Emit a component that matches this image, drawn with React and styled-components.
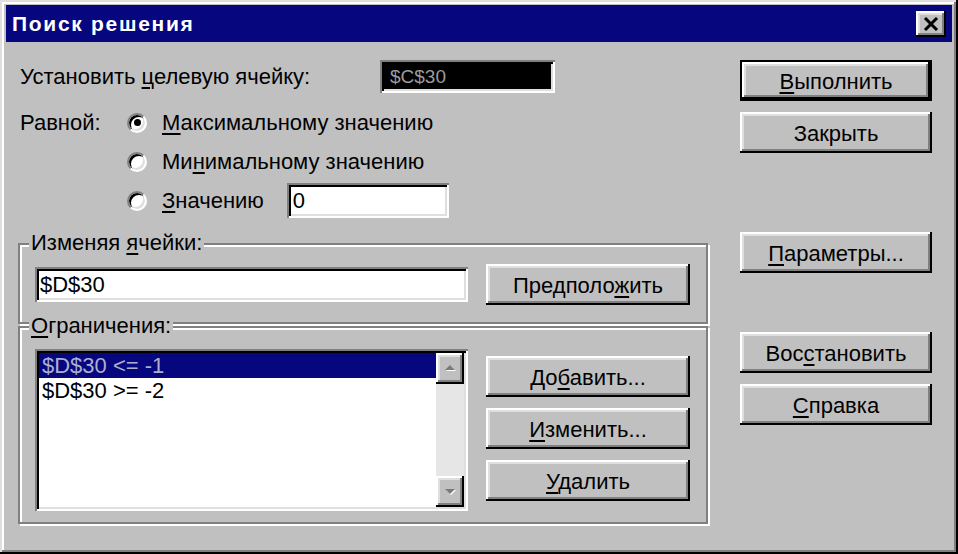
import styled, { createGlobalStyle } from "styled-components";

const GlobalStyle = createGlobalStyle`
    html, body {
        margin: 0;
        padding: 0;
        background: #c0c0c0;
    }
    body {
        font-family: "Liberation Sans", Arial, sans-serif;
        color: #000;
    }
    * {
        box-sizing: border-box;
    }
`;

const raised = `
    box-shadow: inset -2px -2px 0 #000, inset 2px 2px 0 #fff,
        inset -4px -4px 0 #808080, inset 4px 4px 0 #dfdfdf;
`;
const sunken = `
    box-shadow: inset 2px 2px 0 #808080, inset -2px -2px 0 #fff,
        inset 4px 4px 0 #000, inset -4px -4px 0 #dfdfdf;
`;

const Window = styled.div`
    width: 958px;
    height: 554px;
    padding: 5px 6px;
    background: #c0c0c0;
    box-shadow: inset -2px -2px 0 #000, inset 2px 2px 0 #dfdfdf,
        inset -4px -4px 0 #808080, inset 4px 4px 0 #fff;
`;
const TitleBar = styled.div`
    height: 37px;
    display: flex;
    align-items: center;
    justify-content: space-between;
    padding: 0 6px;
    background: #06067f;
`;
const Title = styled.span`
    color: #fff;
    font-weight: bold;
    font-size: 21px;
    letter-spacing: 1.7px;
`;
const CloseButton = styled.button`
    width: 30px;
    height: 26px;
    border: 0;
    padding: 0;
    background: #c0c0c0;
    display: flex;
    align-items: center;
    justify-content: center;
    ${raised}
`;
const Body = styled.div`
    display: flex;
`;
const Main = styled.div`
    width: 702px;
    padding-left: 14px;
`;
const TargetRow = styled.div`
    display: grid;
    grid-template-columns: 360px 175px;
    align-items: center;
    margin-top: 18px;
    height: 33px;
`;
const Label = styled.span`
    font-size: 22px;
    white-space: nowrap;
`;
const Key = styled.u`
    text-decoration-thickness: 2px;
    text-underline-offset: 3px;
`;
const TargetField = styled.div`
    height: 33px;
    background: #000;
    color: #9c9c9c;
    font-size: 19px;
    line-height: 33px;
    padding-left: 10px;
    ${sunken}
`;
const Options = styled.div`
    display: grid;
    grid-template-columns: 107px 1fr;
    grid-auto-rows: 39px;
    align-items: center;
    margin-top: 10px;
`;
const RadioRow = styled.div`
    grid-column: 2;
    display: flex;
    align-items: center;
    gap: 15px;
`;
const Radio = styled.span`
    width: 20px;
    height: 20px;
    flex: none;
    border-radius: 50%;
    border: 2px solid;
    border-color: #808080 #fff #fff #808080;
    background: #fff;
    box-shadow: inset 2px 2px 0 #000, inset -2px -2px 0 #dfdfdf;
    display: flex;
    align-items: center;
    justify-content: center;
    &::after {
        content: "";
        width: 7px;
        height: 7px;
        border-radius: 50%;
        background: ${p => (p.$checked ? "#000" : "transparent")};
    }
`;
const ValueField = styled.div`
    width: 162px;
    height: 35px;
    margin-left: 8px;
    background: #fff;
    font-size: 22px;
    line-height: 35px;
    padding-left: 6px;
    ${sunken}
`;
const Group = styled.div`
    position: relative;
    width: 690px;
    margin-left: -2px;
    margin-top: ${p => p.$mt}px;
    border: 2px solid #808080;
    box-shadow: inset 2px 2px 0 #fff, 2px 2px 0 #fff;
    padding: ${p => p.$pad};
`;
const Legend = styled.span`
    position: absolute;
    top: -14px;
    left: 9px;
    padding: 0 2px;
    font-size: 22px;
    line-height: 24px;
    background: #c0c0c0;
`;
const FieldRow = styled.div`
    display: flex;
    align-items: center;
    justify-content: space-between;
`;
const TextField = styled.div`
    width: 433px;
    height: 35px;
    background: #fff;
    font-size: 22px;
    line-height: 35px;
    padding-left: 5px;
    ${sunken}
`;
const Button = styled.button`
    width: ${p => p.$width || 192}px;
    height: 41px;
    padding: 2px 0 0;
    border: ${p => (p.$default ? "2px solid #000" : "0")};
    background: #c0c0c0;
    font-family: "Liberation Sans", Arial, sans-serif;
    font-size: 22px;
    color: #000;
    text-align: center;
    ${raised}
`;
const ListRow = styled.div`
    display: flex;
    justify-content: space-between;
    align-items: flex-start;
`;
const ListBox = styled.div`
    width: 433px;
    height: 162px;
    background: #fff;
    padding: 4px;
    display: flex;
    ${sunken}
`;
const ListItems = styled.div`
    flex: 1;
`;
const ListItem = styled.div`
    height: 25px;
    line-height: 25px;
    font-size: 22px;
    padding-left: 3px;
    background: ${p => (p.$selected ? "#06067f" : "transparent")};
    color: ${p => (p.$selected ? "#aeaecb" : "#000")};
`;
const ScrollBar = styled.div`
    width: 28px;
    display: flex;
    flex-direction: column;
`;
const ScrollButton = styled.div`
    height: 31px;
    background: #c0c0c0;
    display: flex;
    align-items: center;
    justify-content: center;
    ${raised}
`;
const ScrollTrack = styled.div`
    flex: 1;
    background: #e6e6e6;
`;
const ButtonStack = styled.div`
    display: flex;
    flex-direction: column;
    gap: 11px;
    margin-top: ${p => p.$mt || 0}px;
`;
const Side = styled.div`
    width: 192px;
    margin-left: 32px;
    padding-top: 18px;
`;

const Arrow = ({ down }) => (
    <svg width="14" height="9" viewBox="0 0 14 9">
        {down ? (
            <>
                <polygon points="3,3 13,3 8,8" fill="#fff" />
                <polygon points="2,2 12,2 7,7" fill="#7a7a7a" />
            </>
        ) : (
            <>
                <polygon points="8,2 13,7 3,7" fill="#fff" />
                <polygon points="7,1 12,6 2,6" fill="#7a7a7a" />
            </>
        )}
    </svg>
);

export default function App() {
    return (
        <Window>
            <GlobalStyle />
            <TitleBar>
                <Title>Поиск решения</Title>
                <CloseButton>
                    <svg width="16" height="14" viewBox="0 0 16 14">
                        <path d="M2 1 L14 13 M14 1 L2 13" stroke="#000" strokeWidth="3" />
                    </svg>
                </CloseButton>
            </TitleBar>
            <Body>
                <Main>
                    <TargetRow>
                        <Label>Установить <Key>ц</Key>елевую ячейку:</Label>
                        <TargetField>$C$30</TargetField>
                    </TargetRow>
                    <Options>
                        <Label>Равной:</Label>
                        <RadioRow>
                            <Radio $checked />
                            <Label><Key>М</Key>аксимальному значению</Label>
                        </RadioRow>
                        <RadioRow>
                            <Radio />
                            <Label>Ми<Key>н</Key>имальному значению</Label>
                        </RadioRow>
                        <RadioRow>
                            <Radio />
                            <Label><Key>З</Key>начению</Label>
                            <ValueField>0</ValueField>
                        </RadioRow>
                    </Options>
                    <Group $mt={23} $pad="19px 16px 17px 15px">
                        <Legend>Изменяя <Key>я</Key>чейки:</Legend>
                        <FieldRow>
                            <TextField>$D$30</TextField>
                            <Button $width={204}>Предполо<Key>ж</Key>ить</Button>
                        </FieldRow>
                    </Group>
                    <Group $mt={2} $pad="21px 16px 11px 15px">
                        <Legend><Key>О</Key>граничения:</Legend>
                        <ListRow>
                            <ListBox>
                                <ListItems>
                                    <ListItem $selected>{"$D$30 <= -1"}</ListItem>
                                    <ListItem>{"$D$30 >= -2"}</ListItem>
                                </ListItems>
                                <ScrollBar>
                                    <ScrollButton><Arrow /></ScrollButton>
                                    <ScrollTrack />
                                    <ScrollButton><Arrow down /></ScrollButton>
                                </ScrollBar>
                            </ListBox>
                            <ButtonStack $mt={7}>
                                <Button $width={204}>До<Key>б</Key>авить...</Button>
                                <Button $width={204}><Key>И</Key>зменить...</Button>
                                <Button $width={204}><Key>У</Key>далить</Button>
                            </ButtonStack>
                        </ListRow>
                    </Group>
                </Main>
                <Side>
                    <ButtonStack>
                        <Button $default><Key>В</Key>ыполнить</Button>
                        <Button>Закрыть</Button>
                    </ButtonStack>
                    <ButtonStack $mt={79}>
                        <Button><Key>П</Key>араметры...</Button>
                    </ButtonStack>
                    <ButtonStack $mt={59}>
                        <Button>Вос<Key>с</Key>тановить</Button>
                        <Button><Key>С</Key>правка</Button>
                    </ButtonStack>
                </Side>
            </Body>
        </Window>
    );
}
